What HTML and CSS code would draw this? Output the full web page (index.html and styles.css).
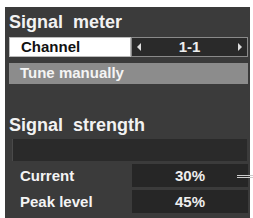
FILE: index.html
```html
<!DOCTYPE html>
<html lang="en">
<head>
    <meta charset="UTF-8">
    <title>Signal meter</title>
    <link rel="stylesheet" href="styles.css">
</head>
<body>
    <div class="panel">
        <h1 class="title">Signal&nbsp; meter</h1>
        <div class="channel-row">
            <div class="channel-label">Channel</div>
            <div class="channel-value">
                <span class="arrow arrow-left"></span>
                <span class="channel-num">1-1</span>
                <span class="arrow arrow-right"></span>
            </div>
        </div>
        <div class="tune-row">Tune manually</div>
        <h2 class="title strength-title">Signal&nbsp; strength</h2>
        <div class="meter"></div>
        <div class="stat-row">
            <div class="stat-label">Current</div>
            <div class="stat-value">30%</div>
            <div class="callout"></div>
        </div>
        <div class="stat-row">
            <div class="stat-label">Peak level</div>
            <div class="stat-value">45%</div>
        </div>
    </div>
</body>
</html>
```

FILE: styles.css
```css
body {
    margin: 0;
    background: #fff;
    font-family: "Liberation Sans", Arial, sans-serif;
    font-weight: bold;
    color: #fff;
}

.panel {
    margin: 7px 3px 0 5px;
    padding: 5px 2px 5px 4px;
    background: #3b3b3b;
}

.title {
    margin: 0;
    font-size: 18px;
    line-height: 20px;
    color: #f2f2f2;
}

.channel-row {
    display: flex;
    height: 20px;
    margin-top: 5px;
    font-size: 15px;
    line-height: 20px;
}

.channel-label {
    width: 122px;
    padding-left: 11px;
    box-sizing: border-box;
    background: #fff;
    color: #111;
    border: 1px solid #bbb;
    line-height: 18px;
}

.channel-value {
    flex: 1;
    display: flex;
    align-items: center;
    justify-content: space-between;
    padding: 0 5px;
    background: #2a2a2a;
    border: 1px solid #8a8a8a;
    line-height: 18px;
}

.channel-num {
    color: #eee;
}

.arrow {
    width: 0;
    height: 0;
    border-top: 4px solid transparent;
    border-bottom: 4px solid transparent;
}

.arrow-left {
    border-right: 4px solid #ddd;
}

.arrow-right {
    border-left: 4px solid #ddd;
}

.tune-row {
    height: 21px;
    margin-top: 6px;
    padding-left: 11px;
    background: #8c8c8c;
    font-size: 15px;
    line-height: 19px;
    color: #f4f4f4;
}

.strength-title {
    margin-top: 31px;
}

.meter {
    height: 22px;
    margin: 4px 1px 0 3px;
    background: #2a2a2a;
    border-left: 1px solid #4a4a4a;
}

.stat-row {
    position: relative;
    display: flex;
    height: 23px;
    margin-top: 3px;
    font-size: 15px;
    line-height: 23px;
}

.stat-label {
    width: 123px;
    padding-left: 11px;
    box-sizing: border-box;
    color: #f4f4f4;
}

.stat-value {
    flex: 1;
    text-align: center;
    background: #262626;
    color: #eee;
}

.callout {
    position: absolute;
    top: 11px;
    right: -5px;
    width: 16px;
    height: 1px;
    border-top: 1px solid #ccc;
    border-bottom: 1px solid #ccc;
}
```
